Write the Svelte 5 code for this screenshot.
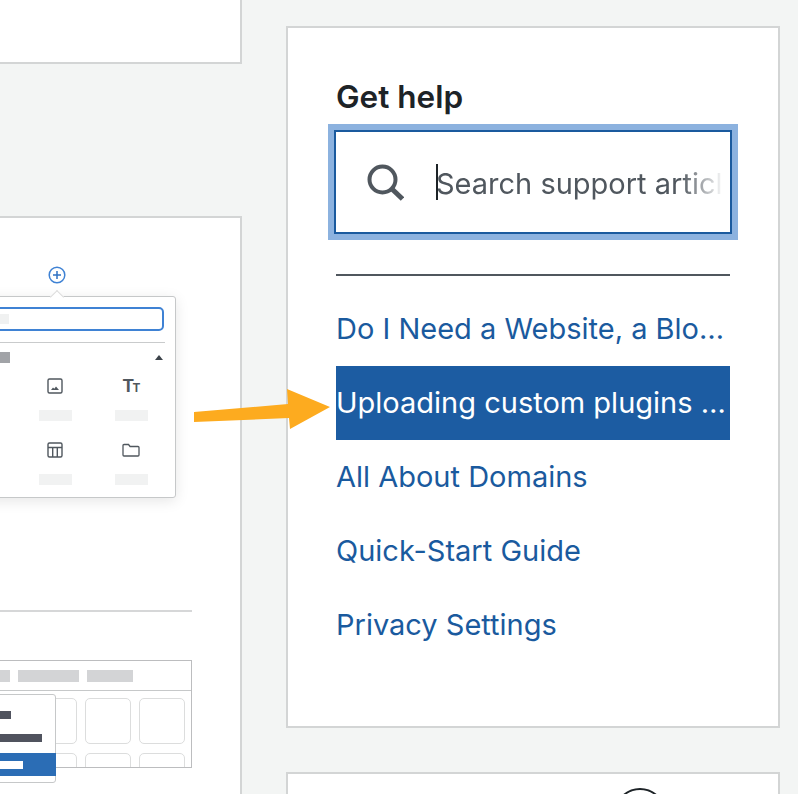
<script>
  const links = [
    { text: 'Do I Need a Website, a Blog, or a Website with a Blog?', active: false },
    { text: 'Uploading custom plugins and themes', active: true },
    { text: 'All About Domains', active: false },
    { text: 'Quick-Start Guide', active: false },
    { text: 'Privacy Settings', active: false }
  ];
</script>

<div class="page">
  <div class="left">
    <div class="card top"></div>
    <div class="card mock">
      <svg class="plus" viewBox="0 0 18 18" width="18" height="18" aria-hidden="true">
        <circle cx="9" cy="9" r="7.8" fill="none" stroke="#3f82d4" stroke-width="1.5" />
        <path d="M9 5v8M5 9h8" fill="none" stroke="#2f72c4" stroke-width="1.5" />
      </svg>
      <div class="popover">
        <span class="caret"></span>
        <div class="pop-search"><span class="ph"></span></div>
        <div class="pop-rule"></div>
        <div class="pop-head"><span class="head-bar"></span><span class="tri"></span></div>
        <div class="pop-grid">
          <div class="cell">
            <svg viewBox="0 0 18 18" width="18" height="18" aria-hidden="true">
              <rect x="2" y="2" width="14" height="14" rx="1.5" fill="none" stroke="#50575e" stroke-width="1.4" />
              <path d="M5 13l2-2.6 1.3 1.4L10 9.6 13 13z" fill="#50575e" />
            </svg>
            <span class="lbl"></span>
          </div>
          <div class="cell">
            <span class="tt">T<small>T</small></span>
            <span class="lbl"></span>
          </div>
          <div class="cell">
            <svg viewBox="0 0 18 18" width="18" height="18" aria-hidden="true">
              <rect x="2" y="2" width="14" height="14" rx="1.5" fill="none" stroke="#50575e" stroke-width="1.4" />
              <path d="M2 6.500h14M6.700 6.500V16M11.300 6.500V16" fill="none" stroke="#50575e" stroke-width="1.400" />
            </svg>
            <span class="lbl"></span>
          </div>
          <div class="cell">
            <svg viewBox="0 0 18 18" width="18" height="18" aria-hidden="true">
              <path d="M1 4.500a1 1 0 0 1 1-1h4.500l1.600 2h7.900a1 1 0 0 1 1 1v7.500a1 1 0 0 1-1 1H2a1 1 0 0 1-1-1z" fill="none" stroke="#50575e" stroke-width="1.300" />
            </svg>
            <span class="lbl"></span>
          </div>
        </div>
      </div>
      <div class="mock-rule"></div>
      <div class="table">
        <div class="t-head"><span class="b1"></span><span class="b2"></span><span class="b3"></span></div>
        <div class="t-grid">
          {#each Array(8) as _}
            <span class="tile"></span>
          {/each}
        </div>
      </div>
      <div class="menu">
        <span class="m1"></span>
        <span class="m2"></span>
        <div class="m-active"><span></span></div>
      </div>
    </div>
  </div>

  <div class="right">
    <section class="card help">
      <h2>Get help</h2>
      <div class="search">
        <svg viewBox="0 0 38 38" width="38" height="38" aria-hidden="true">
          <circle cx="16.500" cy="16.500" r="13" fill="none" stroke="#50575e" stroke-width="4" />
          <path d="M26 26l10.500 10" fill="none" stroke="#50575e" stroke-width="5" />
        </svg>
        <div class="field"><span class="cursor"></span><span class="ph-text">Search support articles</span></div>
      </div>
      <hr />
      <ul>
        {#each links as l}
          <li class:active={l.active}>{l.text}</li>
        {/each}
      </ul>
    </section>
    <section class="card next"><span class="circle"></span></section>
  </div>

  <svg class="arrow" viewBox="0 0 140 44" width="140" height="44" aria-hidden="true">
    <polygon points="0,23 94,15 93,0 136,18 96,40 95,29 0,33" fill="#fdab1f" />
  </svg>
</div>

<style>
  :global(body) {
    margin: 0;
    background: #f3f5f4;
  }
  .page {
    position: relative;
    width: 798px;
    height: 794px;
    overflow: hidden;
    display: grid;
    grid-template-columns: 242px 494px;
    column-gap: 44px;
    font-family: "Inter", "Liberation Sans", sans-serif;
    color: #1d2327;
  }
  .card {
    background: #fff;
    border: 2px solid #d3d5d5;
    box-sizing: border-box;
  }
  .left {
    display: flex;
    flex-direction: column;
    gap: 152px;
  }
  .card.top {
    height: 64px;
    border-top: 0;
    border-left: 0;
  }
  .card.mock {
    position: relative;
    height: 600px;
    border-left: 0;
  }
  .plus {
    position: absolute;
    left: 48px;
    top: 48px;
  }
  .popover {
    position: absolute;
    left: -20px;
    top: 78px;
    width: 196px;
    height: 202px;
    box-sizing: border-box;
    background: #fff;
    border: 1px solid #c6c8c9;
    border-radius: 3px;
    box-shadow: 0 3px 14px rgba(0, 0, 0, 0.1);
  }
  .caret {
    position: absolute;
    left: 71px;
    top: -5px;
    width: 9px;
    height: 9px;
    background: #fff;
    border-left: 1px solid #dcdcdc;
    border-top: 1px solid #dcdcdc;
    transform: rotate(45deg);
  }
  .pop-search {
    position: absolute;
    left: -10px;
    right: 11px;
    top: 10px;
    height: 24px;
    box-sizing: border-box;
    border: 2px solid #3f82d4;
    border-radius: 5px;
    display: flex;
    align-items: center;
  }
  .ph {
    margin-left: 16px;
    width: 20px;
    height: 10px;
    background: #f0f1f1;
  }
  .pop-rule {
    position: absolute;
    left: 0;
    right: 10px;
    top: 45px;
    height: 1px;
    background: #c9cbcc;
  }
  .pop-head {
    position: absolute;
    left: 0;
    right: 12px;
    top: 55px;
    height: 11px;
    display: flex;
    justify-content: space-between;
    align-items: center;
  }
  .head-bar {
    width: 29px;
    height: 11px;
    background: #a1a3a7;
  }
  .tri {
    width: 0;
    height: 0;
    border: 4px solid transparent;
    border-top: 0;
    border-bottom: 5px solid #3c434a;
  }
  .pop-grid {
    position: absolute;
    left: 36px;
    top: 77px;
    display: grid;
    grid-template-columns: 76px 76px;
    row-gap: 12px;
  }
  .cell {
    display: flex;
    flex-direction: column;
    align-items: center;
    height: 52px;
  }
  .cell svg, .tt {
    height: 24px;
    margin-bottom: 12px;
  }
  .lbl {
    width: 33px;
    height: 11px;
    background: #f1f2f2;
  }
  .tt {
    font: 700 18px/24px "Liberation Sans", sans-serif;
    color: #50575e;
    letter-spacing: -1px;
  }
  .tt small {
    font-size: 12px;
  }
  .mock-rule {
    position: absolute;
    left: 0;
    width: 192px;
    top: 392px;
    height: 2px;
    background: #d6d7d8;
  }
  .table {
    position: absolute;
    left: 0;
    top: 442px;
    width: 192px;
    height: 108px;
    box-sizing: border-box;
    border: 1px solid #bcbdbf;
    border-left: 0;
    overflow: hidden;
  }
  .t-head {
    height: 29px;
    border-bottom: 1px solid #c6c8c9;
    display: flex;
    align-items: center;
    gap: 8px;
  }
  .t-head span {
    height: 12px;
    background: #d3d4d6;
  }
  .b1 { width: 10px; }
  .b2 { width: 61px; }
  .b3 { width: 46px; }
  .t-grid {
    display: grid;
    grid-template-columns: repeat(4, 46px);
    column-gap: 8px;
    row-gap: 9px;
    margin-left: -23px;
    padding-top: 7px;
    width: 240px;
  }
  .tile {
    height: 46px;
    box-sizing: border-box;
    border: 1px solid #dcdddd;
    border-radius: 5px;
  }
  .menu {
    position: absolute;
    left: -4px;
    top: 476px;
    width: 60px;
    height: 89px;
    box-sizing: border-box;
    background: #fff;
    border: 1px solid #c6c8c9;
    border-radius: 3px;
  }
  .m1, .m2 {
    position: absolute;
    left: 0;
    height: 8px;
    background: #50535e;
  }
  .m1 { top: 16px; width: 14px; }
  .m2 { top: 39px; width: 45px; }
  .m-active {
    position: absolute;
    left: 0;
    right: -1px;
    top: 58px;
    height: 23px;
    background: #2b6db5;
    display: flex;
    align-items: center;
  }
  .m-active span {
    width: 26px;
    height: 8px;
    background: #fff;
  }
  .right {
    display: flex;
    flex-direction: column;
    gap: 44px;
    padding-top: 26px;
  }
  .help {
    height: 702px;
    padding: 46px 48px 0;
  }
  h2 {
    margin: 0;
    font-size: 31.500px;
    line-height: 46px;
    font-weight: 600;
    color: #1d2327;
  }
  .search {
    margin: 10px -2px 0 -2px;
    height: 104px;
    box-sizing: border-box;
    border: 2px solid #1a5a9e;
    box-shadow: 0 0 0 6px #8cb2df;
    display: flex;
    align-items: center;
    padding-left: 30px;
    gap: 32px;
  }
  .field {
    position: relative;
    flex: 1;
    margin-right: 6px;
    overflow: hidden;
    white-space: nowrap;
    font-size: 29px;
    line-height: 36px;
    color: #50575e;
    -webkit-mask-image: linear-gradient(to right, #000 85%, transparent 100%);
    mask-image: linear-gradient(to right, #000 85%, transparent 100%);
  }
  .ph-text {
    display: block;
    padding-top: 2px;
    margin-bottom: -2px;
  }
  .cursor {
    position: absolute;
    left: 0;
    top: 0;
    width: 2px;
    height: 36px;
    background: #1d2327;
  }
  hr {
    margin: 40px 0 0;
    border: 0;
    height: 2px;
    background: #50575e;
  }
  ul {
    list-style: none;
    margin: 16px 0 0;
    padding: 0;
  }
  li {
    height: 74px;
    line-height: 74px;
    font-size: 29px;
    color: #1a5a9e;
    white-space: nowrap;
    overflow: hidden;
    text-overflow: ellipsis;
  }
  li.active {
    background: #1c5ca2;
    color: #fff;
  }
  .next {
    flex: 1;
    padding: 14px 0 0 326px;
  }
  .circle {
    display: block;
    width: 52px;
    height: 52px;
    box-sizing: border-box;
    border: 2px solid #1d2327;
    border-radius: 50%;
  }
  .arrow {
    position: absolute;
    left: 194px;
    top: 389px;
  }
</style>
